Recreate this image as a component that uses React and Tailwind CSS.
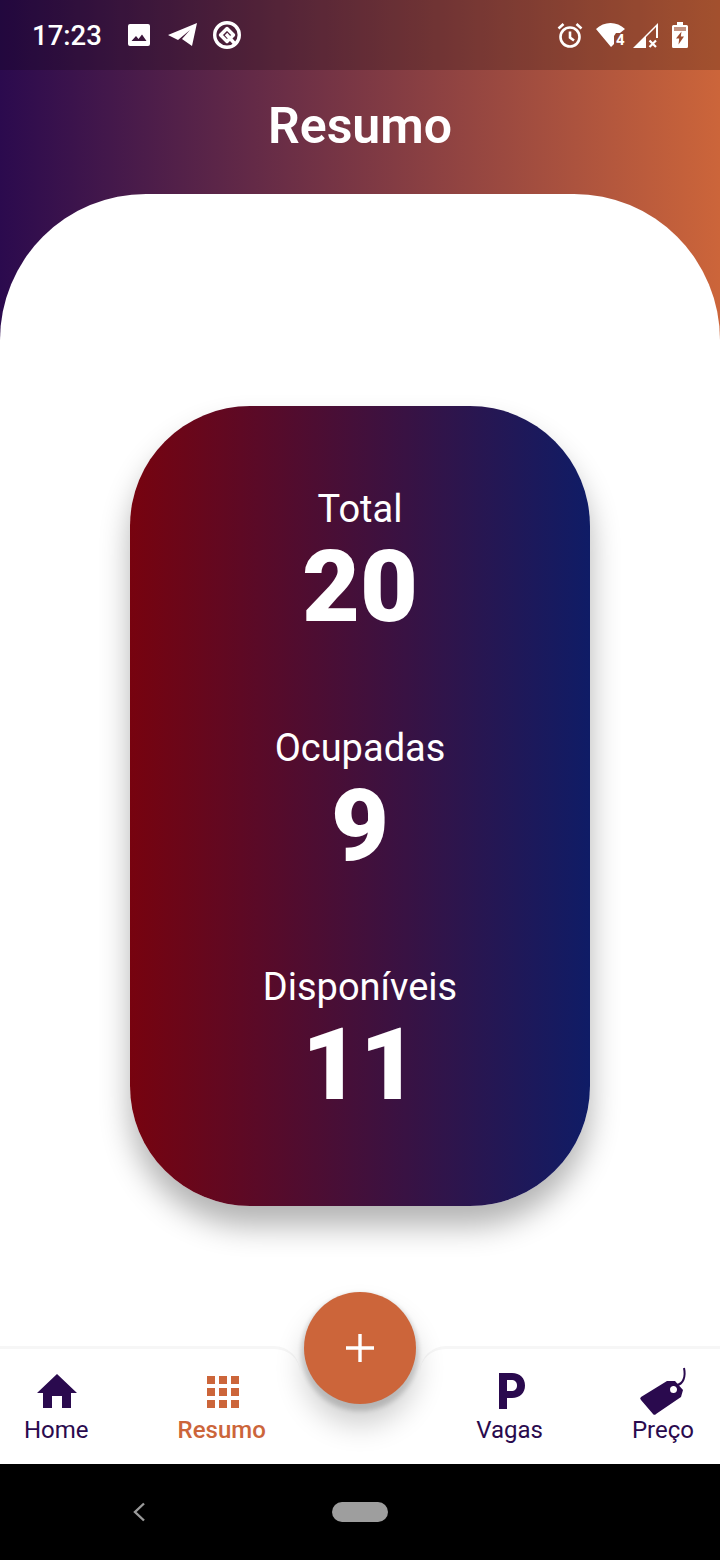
function Stat({ label, value }) {
  return (
    <div className="flex flex-col items-center">
      <div className="text-[38px] leading-[44px] text-white">{label}</div>
      <div className="text-[100px] leading-[112px] font-black text-white">{value}</div>
    </div>
  );
}

function NavItem({ label, active, children }) {
  return (
    <div className="flex flex-col items-center">
      <div className="h-[36px] flex items-center justify-center">{children}</div>
      <div className={`text-[24px] leading-[28px] mt-[7px] ${active ? 'text-[#cc653a] font-medium' : 'text-[#2a0a4e]'}`}>{label}</div>
    </div>
  );
}

export default function App() {
  return (
    <div className="relative w-[720px] h-[1560px] overflow-hidden bg-white font-['Roboto',sans-serif]">
      {/* Header */}
      <div className="h-[340px] bg-[linear-gradient(90deg,#2b0a4e_0%,#cc653a_100%)]">
        {/* Status bar */}
        <div className="h-[70px] bg-black/20 flex items-center justify-between pl-[32px] pr-[32px] text-white">
          <div className="flex items-center">
            <span className="text-[27.5px] leading-[32px] font-medium mt-[2px]">17:23</span>
            <svg className="ml-[26px]" width="22" height="22" viewBox="0 0 22 22" fill="#fff">
              <path fillRule="evenodd" d="M2 0h18a2 2 0 0 1 2 2v18a2 2 0 0 1-2 2H2a2 2 0 0 1-2-2V2a2 2 0 0 1 2-2zm1.500 17h15l-4.500-6.500-3.500 4.500-2.500-3z" />
            </svg>
            <svg className="ml-[18px]" width="29" height="24" viewBox="0 0 29 24" fill="#fff">
              <path d="M29 0 24 23 14 16 22 7 10 17 0 12z" />
            </svg>
            <svg className="ml-[16px]" width="28" height="28" viewBox="0 0 28 28" fill="none" stroke="#fff" strokeWidth="3.400">
              <circle cx="14" cy="14" r="12.300" />
              <path d="M14 7.500 20.500 14 14 20.500 7.500 14z" strokeLinejoin="round" />
              <path d="M13 13l10 11" />
            </svg>
          </div>
          <div className="flex items-center">
            <svg width="26" height="26" viewBox="0 0 26 26" fill="none" stroke="#fff" strokeWidth="2.600">
              <circle cx="13" cy="15" r="9.500" />
              <path d="M13 9.500v6l4 3M1.500 6.500 6.500 2M24.500 6.500 19.500 2" />
            </svg>
            <svg className="ml-[13px] mt-[4px]" width="29" height="28" viewBox="0 0 29 28" fill="#fff">
              <path d="M0 6C8-2 21-2 29 6L24 10H20L18 13V21L15 24z" />
              <text x="20" y="21.500" fontSize="15" fontWeight="700" fill="#fff" fontFamily="Roboto, sans-serif">4</text>
            </svg>
            <svg className="ml-[8px]" width="25" height="25" viewBox="0 0 25 25">
              <path d="M25 0V15H23V4L13 14V25H0z" fill="#fff" />
              <path d="M16.500 17.500l6.500 6.500M23 17.500 16.500 24" stroke="#fff" strokeWidth="2.200" />
            </svg>
            <svg className="ml-[14px]" width="16" height="26" viewBox="0 0 16 26" fill="#fff">
              <path fillRule="evenodd" d="M5 0h6v3h3.500a1.500 1.500 0 0 1 1.500 1.500v20a1.500 1.500 0 0 1-1.500 1.500h-13A1.500 1.500 0 0 1 0 24.500v-20A1.500 1.500 0 0 1 1.500 3H5zM2 5v4h12V5zm7.500 4.500L4 16.500h3.200L6.500 22.500 12 14.500H8.800z" />
              <path d="M2 5h12v4H2z" fillOpacity="0.4" />
            </svg>
          </div>
        </div>
        <h1 className="text-center text-[50px] leading-[56px] font-semibold text-white mt-[28px]">Resumo</h1>
      </div>

      {/* Main */}
      <div className="h-[1152px] -mt-[146px] bg-white rounded-t-[146px] pt-[212px] flex justify-center">
        <div className="w-[460px] h-[800px] rounded-[120px] bg-[linear-gradient(90deg,#77030f_0%,#0f1c66_100%)] shadow-[0_20px_30px_rgba(0,0,0,0.3)] flex flex-col items-center pt-[81px] gap-[83px]">
          <Stat label="Total" value="20" />
          <Stat label="Ocupadas" value="9" />
          <Stat label="Disponíveis" value="11" />
        </div>
      </div>

      {/* Bottom nav */}
      <div className="h-[118px] bg-white flex justify-between">
        <div className="w-[300px] flex gap-[89px] pl-[24px] pt-[24px] border-t-[3px] border-[#f6f6f6] rounded-tr-[26px]">
          <NavItem label="Home">
            <svg width="40" height="34" viewBox="0 0 40 34" fill="#2a0a4e" className="ml-[2px]">
              <path d="M20 0l20 19h-6v15h-9V22h-10v12H6V19H0z" />
            </svg>
          </NavItem>
          <NavItem label="Resumo" active>
            <svg width="32" height="32" viewBox="0 0 32 32" fill="#cc653a" className="mt-[2px] ml-[2px]">
              <path d="M0 0h8v8H0zM12 0h8v8h-8zM24 0h8v8h-8zM0 12h8v8H0zM12 12h8v8h-8zM24 12h8v8h-8zM0 24h8v8H0zM12 24h8v8h-8zM24 24h8v8h-8z" />
            </svg>
          </NavItem>
        </div>
        <div className="w-[300px] flex justify-end gap-[89px] pr-[26px] pt-[24px] border-t-[3px] border-[#f6f6f6] rounded-tl-[26px]">
          <NavItem label="Vagas">
            <svg width="26" height="36" viewBox="0 0 26 36" fill="#2a0a4e" className="ml-[4px]">
              <path fillRule="evenodd" d="M0 0h13c8 0 13 5 13 12.500S21 25 13 25H8v11H0zm8 7v11h4c4 0 6-2 6-5.500S16 7 12 7z" />
            </svg>
          </NavItem>
          <NavItem label="Preço">
            <svg width="47" height="48" viewBox="0 0 47 48" fill="#2a0a4e" className="overflow-visible ml-[2px]">
              <path fillRule="evenodd" d="M1 30 27 14l8 0 8 9-2 7-25 17a2 2 0 0 1-3 0L1 33a2 2 0 0 1 0-3zm32-11a3.500 3.500 0 1 0 4 4 3.500 3.500 0 0 0-4-4z" />
              <path d="M37 18c6-1 9-8 7-17" fill="none" stroke="#2a0a4e" strokeWidth="2" />
            </svg>
          </NavItem>
        </div>
      </div>

      {/* Add button */}
      <button className="absolute left-[304px] top-[1292px] w-[112px] h-[112px] rounded-full bg-[#cc653a] shadow-[0_4px_4px_3px_rgba(0,0,0,0.14),0_20px_30px_rgba(0,0,0,0.2)] flex items-center justify-center">
        <svg width="30" height="30" viewBox="0 0 30 30" fill="none" stroke="#fff" strokeWidth="3.400">
          <path d="M15 1v28M1 15h28" />
        </svg>
      </button>

      {/* System nav */}
      <div className="relative h-[96px] bg-black flex items-center justify-center">
        <svg className="absolute left-[132px] top-[38px]" width="14" height="20" viewBox="0 0 14 20" fill="none" stroke="#9a9a9a" strokeWidth="2.400">
          <path d="M12 1.500 3 10l9 8.500" />
        </svg>
        <div className="w-[56px] h-[20px] rounded-full bg-[#9e9e9e]" />
      </div>
    </div>
  );
}
